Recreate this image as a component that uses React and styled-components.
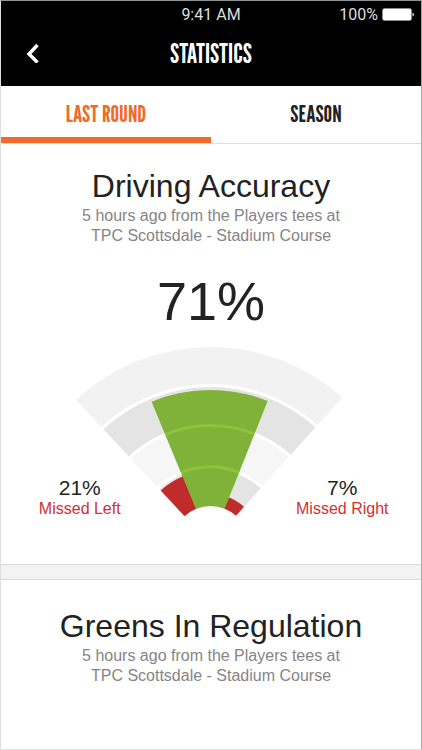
import React from 'react';
import styled, {createGlobalStyle} from "styled-components";

const GlobalStyle = createGlobalStyle`
* {
    box-sizing: border-box;
}
body {
    margin: 0;
    background-color: #fff;
    color: #222;
    font-family: "Liberation Sans", Arial, sans-serif;
}
h1, h2, p {
    margin: 0;
    font-weight: normal;
}
`

const CENTER = {x: 134.5, y: 198};

// angles are in degrees from straight up, negative to the left
const point = (radius, angle) => {
    const rad = angle * Math.PI / 180;
    return `${(CENTER.x + radius * Math.sin(rad)).toFixed(2)} ${(CENTER.y - radius * Math.cos(rad)).toFixed(2)}`;
}

const slice = (inner, outer, from, to) => (
    `M${point(inner, from)} L${point(outer, from)} A${outer} ${outer} 0 0 1 ${point(outer, to)} ` +
    `L${point(inner, to)} A${inner} ${inner} 0 0 0 ${point(inner, from)} Z`
)

const arc = (radius, from, to) => (
    `M${point(radius, from)} A${radius} ${radius} 0 0 1 ${point(radius, to)}`
)

const rings = [
    {inner: 160, outer: 197, color: "#f2f2f2"},
    {inner: 120, outer: 157, color: "#e4e4e4"},
    {inner: 78, outer: 117, color: "#f6f6f6"},
    {inner: 39, outer: 75, color: "#e4e4e4"},
];

const FanChart = () => (
    <Fan viewBox="0 0 270 173" role="img" aria-label="Driving accuracy chart">
        {rings.map(ring => (
            <path key={ring.outer} d={slice(ring.inner, ring.outer, -43, 42)} fill={ring.color}/>
        ))}
        <path d={slice(38, 73, -43, -22)} fill="#c02b2b"/>
        <path d={slice(38, 50, 21, 42)} fill="#c02b2b"/>
        <path d={slice(38, 154, -22.5, 21.8)} fill="#80b239"/>
        <path d={arc(118.5, -22.5, 21.8)} fill="none" stroke="#8cc43a" strokeWidth="3"/>
        <path d={arc(77, -22.5, 21.8)} fill="none" stroke="#8cc43a" strokeWidth="3"/>
    </Fan>
)

const Missed = ({value, label}) => (
    <MissedStat>
        <MissedValue>{value}</MissedValue>
        <MissedLabel>{label}</MissedLabel>
    </MissedStat>
)

const Heading = ({title}) => (
    <>
        <Title>{title}</Title>
        <Subtitle>
            5 hours ago from the Players tees at<br/>
            TPC Scottsdale - Stadium Course
        </Subtitle>
    </>
)

const App = () => {
    return (
        <>
        <GlobalStyle/>
        <Screen>
            <Header>
                <StatusBar>
                    <Time>9:41 AM</Time>
                    <Power>
                        100%
                        <svg width="32" height="14" viewBox="0 0 32 14" aria-hidden="true">
                            <rect x="0.5" y="0.5" width="29" height="12" rx="2" fill="#fff" stroke="#8e8e8e"/>
                            <path d="M30.5 4.5 Q32 5 32 6.5 Q32 8 30.5 8.5 Z" fill="#ddd"/>
                        </svg>
                    </Power>
                </StatusBar>
                <NavBar>
                    <BackButton aria-label="Back">
                        <svg width="14" height="20" viewBox="0 0 14 20" fill="none" aria-hidden="true">
                            <path d="M11.5 2 L3 11 L11.5 19.5" stroke="#fff" strokeWidth="3.5"/>
                        </svg>
                    </BackButton>
                    <NavTitle>STATISTICS</NavTitle>
                </NavBar>
            </Header>
            <Tabs>
                <Tab $active aria-current="true">LAST ROUND</Tab>
                <Tab>SEASON</Tab>
            </Tabs>
            <main>
                <Section $top={22}>
                    <Heading title="Driving Accuracy"/>
                    <Score>71%</Score>
                    <Accuracy>
                        <FanChart/>
                        <Missed value="21%" label="Missed Left"/>
                        <Missed value="7%" label="Missed Right"/>
                    </Accuracy>
                </Section>
                <Divider/>
                <Section $top={26}>
                    <Heading title="Greens In Regulation"/>
                </Section>
            </main>
        </Screen>
        </>
    )
}

const Screen = styled.div`
min-height: 100vh;
border: 1px solid #dedede;
border-right-color: #a8a8a8;
border-top-color: #8e9494;
`

const Header = styled.header`
height: 85px;
background-color: #000;
color: #fff;
`

const StatusBar = styled.div`
display: grid;
grid-template-columns: 1fr auto 1fr;
align-items: center;
height: 28px;
padding: 0 7px;
font-family: Roboto, sans-serif;
font-size: 16px;
line-height: 20px;
color: #ddd;
`

const Time = styled.span`
grid-column: 2;
`

const Power = styled.span`
display: flex;
align-items: center;
justify-content: flex-end;
gap: 4px;
`

const NavBar = styled.div`
display: grid;
grid-template-columns: 64px 1fr 64px;
align-items: center;
height: 48px;
`

const BackButton = styled.button`
display: flex;
align-items: center;
justify-content: center;
height: 48px;
padding: 0;
border: 0;
background: none;
cursor: pointer;
`

const NavTitle = styled.h1`
font-family: "League Gothic", "Roboto Condensed", Roboto, sans-serif;
font-size: 27px;
line-height: 32px;
text-align: center;
`

const Tabs = styled.nav`
display: flex;
height: 58px;
border-bottom: 1px solid #ddd;
`

const Tab = styled.button`
flex: 1;
padding: 4px 0 0;
border: 0;
border-bottom: 6px solid ${props => props.$active ? "#ee6b2a" : "transparent"};
background: none;
color: ${props => props.$active ? "#ee6b2a" : "#222"};
font-family: "League Gothic", "Roboto Condensed", Roboto, sans-serif;
font-size: 24px;
line-height: 32px;
cursor: pointer;
`

const Section = styled.section`
padding: ${props => props.$top}px 0 45px;
text-align: center;
`

const Title = styled.h2`
font-size: 32px;
line-height: 40px;
`

const Subtitle = styled.p`
font-size: 16px;
line-height: 20px;
color: #858585;
`

const Score = styled.p`
padding: 23px 0 13px;
font-size: 54px;
line-height: 64px;
`

const Accuracy = styled.div`
display: grid;
grid-template-columns: 3fr 2fr 3fr;
align-items: end;
`

const Fan = styled.svg`
grid-area: 1 / 1 / 2 / 4;
justify-self: center;
width: 270px;
height: 173px;
`

const MissedStat = styled.div`
grid-row: 1;
grid-column: 1;

& + & {
    grid-column: 3;
}
`

const MissedValue = styled.p`
font-size: 21px;
line-height: 22px;
`

const MissedLabel = styled.p`
font-size: 16px;
line-height: 20px;
color: #d33030;
`

const Divider = styled.div`
height: 16px;
border: 1px solid #d8d8d8;
border-width: 1px 0;
background-color: #f3f3f3;
`

export default App
